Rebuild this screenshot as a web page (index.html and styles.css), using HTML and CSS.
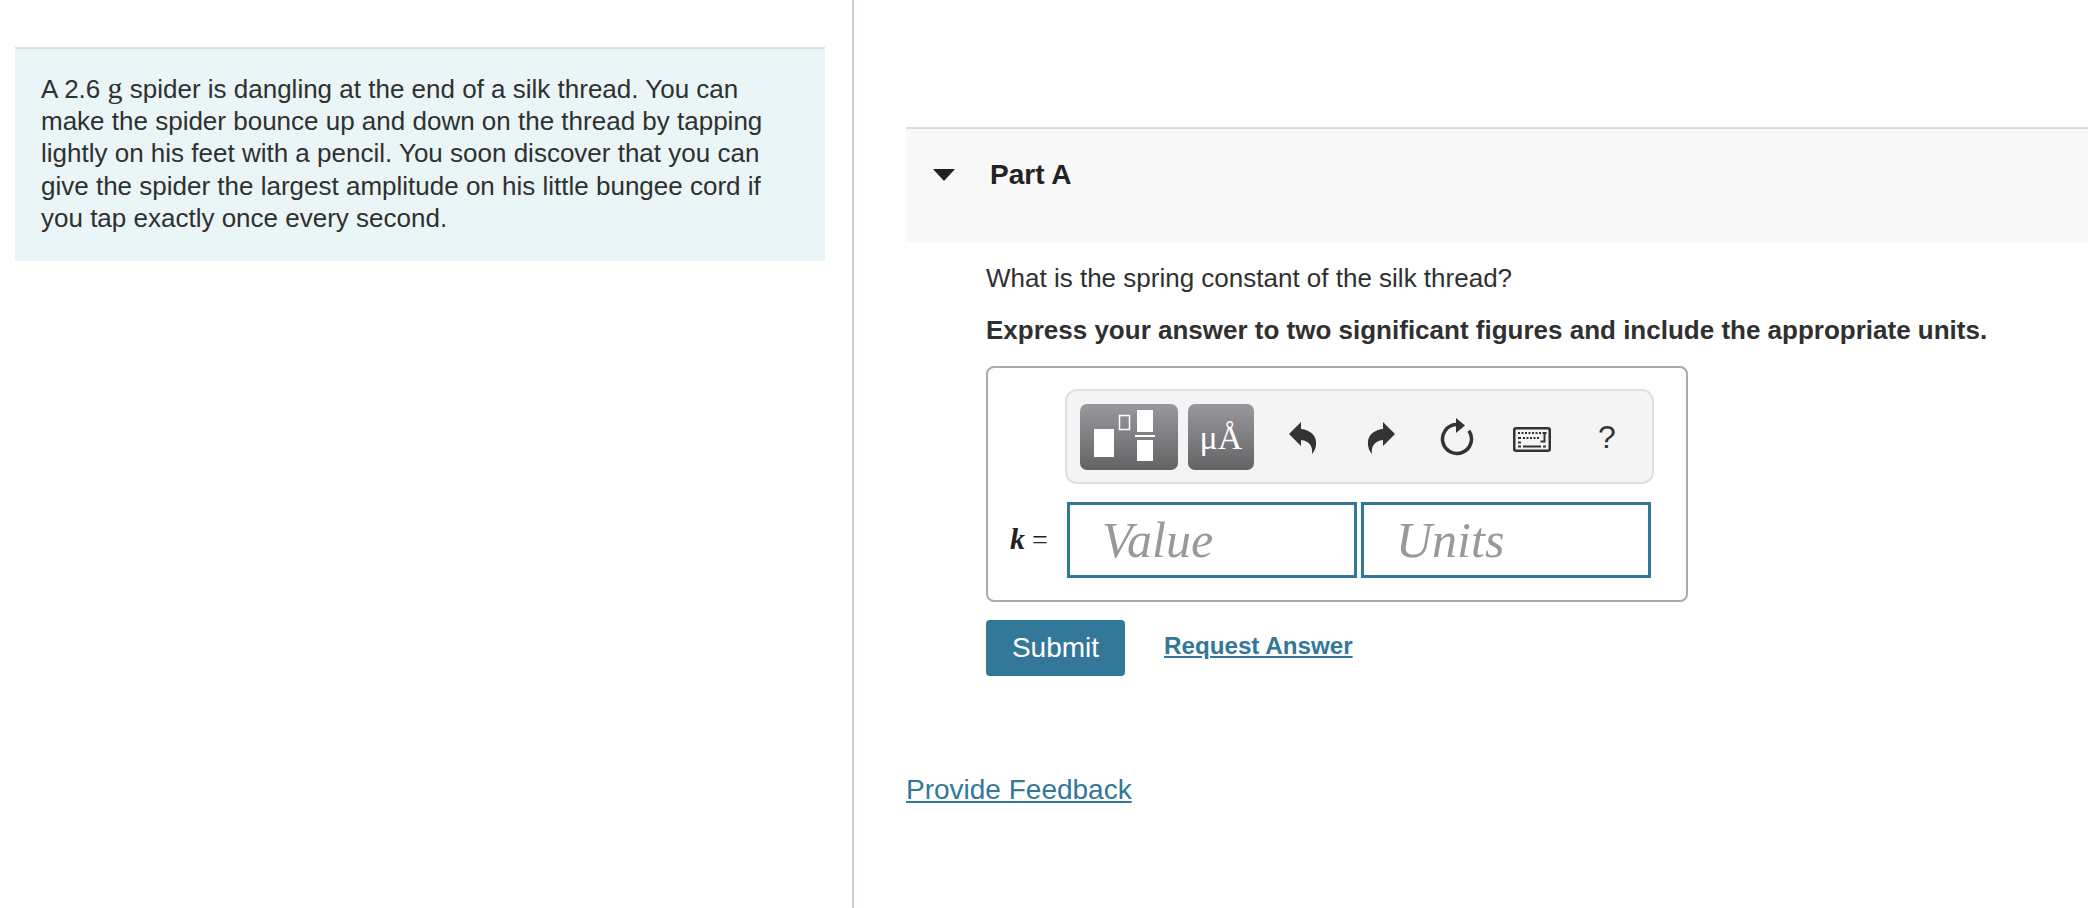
FILE: index.html
```html
<!DOCTYPE html>
<html lang="en">
<head>
<meta charset="utf-8">
<title>Spider problem</title>
<link rel="stylesheet" href="styles.css">
</head>
<body>
<div class="page">
  <aside class="left">
    <div class="intro">
      <p>A 2.6 <span class="unit">g</span> spider is dangling at the end of a silk thread. You can make the spider bounce up and down on the thread by tapping lightly on his feet with a pencil. You soon discover that you can give the spider the largest amplitude on his little bungee cord if you tap exactly once every second.</p>
    </div>
  </aside>
  <main class="right">
    <header class="part-head">
      <svg class="caret" width="24" height="14" viewBox="0 0 24 14"><path d="M1 1H23L12 13Z" fill="#222"/></svg>
      <h2>Part A</h2>
    </header>
    <section class="part-body">
      <p class="question">What is the spring constant of the silk thread?</p>
      <p class="instruct">Express your answer to two significant figures and include the appropriate units.</p>
      <div class="answer">
        <div class="toolbar">
          <div class="tool tool-wide">
            <svg width="98" height="66" viewBox="0 0 98 66">
              <rect x="14" y="25" width="20" height="28" fill="#fff"/>
              <rect x="39.500" y="11.500" width="10" height="14" fill="none" stroke="#fff" stroke-width="1.500"/>
              <rect x="57" y="6" width="16" height="22" fill="#fff"/>
              <rect x="55" y="31" width="20" height="2" fill="#fff"/>
              <rect x="57" y="36" width="16" height="21" fill="#fff"/>
            </svg>
          </div>
          <div class="tool tool-unit"><span>μÅ</span></div>
          <svg class="icon icon-undo" width="30" height="34" viewBox="0 0 30 34"><path d="M1 13 13 1V8C23 9 29 15 28 24 27.500 28 26 31 24 33 25 26 22 20 13 19V25Z" fill="#333"/></svg>
          <svg class="icon icon-redo" width="30" height="34" viewBox="0 0 30 34"><path d="M29 13 17 1V8C7 9 1 15 2 24 2.500 28 4 31 6 33 5 26 8 20 17 19V25Z" fill="#333"/></svg>
          <svg class="icon icon-reset" width="34" height="38" viewBox="0 0 34 38"><path d="M16 6.500A14.500 14.500 0 1 0 28.900 12.700" fill="none" stroke="#333" stroke-width="3.500"/><path d="M16 0 25 7.500 16 15Z" fill="#333"/></svg>
          <svg class="icon icon-keys" width="38" height="25" viewBox="0 0 38 25"><rect x="1.250" y="1.250" width="35.500" height="22.500" rx="2" fill="#f4f4f4" stroke="#333" stroke-width="2.500"/><path d="M5 6h2M8.500 6h2M12 6h2M15.500 6h2M19 6h2M22.500 6h2M26 6h2M29.500 6h4M5 11h3M10 11h2M13.500 11h2M17 11h2M20.500 11h2M24 11h2M31.500 6v8.500h-4M5 15.500h3M5 19.500h3M10 19.500h18M30 19.500h3" stroke="#333" stroke-width="2" fill="none"/></svg>
          <span class="help">?</span>
        </div>
        <div class="entry">
          <span class="label"><i>k</i> =</span>
          <div class="field">Value</div>
          <div class="field field-units">Units</div>
        </div>
      </div>
      <div class="actions">
        <button class="submit" type="button">Submit</button>
        <a class="request" href="#">Request Answer</a>
      </div>
    </section>
    <a class="feedback" href="#">Provide Feedback</a>
  </main>
</div>
</body>
</html>
```
FILE: styles.css
```css
* { box-sizing: border-box; }
html, body { margin: 0; padding: 0; background: #fff; }
body {
  font-family: "Liberation Sans", Arial, sans-serif;
  color: #2b2b2b;
  -webkit-font-smoothing: antialiased;
}
.page { display: flex; height: 908px; overflow: hidden; }
.left {
  flex: 0 0 853px;
  padding: 47px 27px 0 15px;
  border-right: 2px solid #c6d2e0;
}
.intro {
  background: #e9f5f7;
  border-top: 2px solid #dcdfdf;
  height: 214px;
  width: 810px;
  padding: 24px 41px 0 26px;
}
.intro p { margin: 0; font-size: 26px; line-height: 32.200px; color: #303030; }
.unit { font-family: "Liberation Serif", serif; font-size: 30px; line-height: 1; }
.right { flex: 1; padding: 127px 0 0 52px; }
.part-head {
  display: flex;
  align-items: flex-start;
  height: 115px;
  background: #f8f8f8;
  border-top: 2px solid #dcdcdc;
  padding: 30px 0 0 26px;
}
.caret { margin-top: 9px; }
.part-head h2 { margin: 0 0 0 34px; font-size: 28px; line-height: 32px; font-weight: 700; color: #222; }
.part-body { padding: 20px 0 0 80px; }
.question { margin: 0; font-size: 26px; line-height: 32px; color: #303030; }
.instruct { margin: 20px 0 0; font-size: 26px; line-height: 32px; font-weight: 700; color: #303030; }
.answer {
  width: 702px;
  height: 236px;
  margin-top: 20px;
  border: 2px solid #aaa;
  border-radius: 8px;
  padding: 21px 0 0 77px;
}
.toolbar {
  display: flex;
  align-items: center;
  width: 589px;
  height: 95px;
  background: #f4f4f4;
  border: 2px solid #dfdfdf;
  border-radius: 12px;
  padding: 0 0 0 13px;
}
.tool {
  height: 66px;
  border-radius: 7px;
  background: linear-gradient(#9a989e, #636365);
  flex: none;
}
.tool svg { display: block; }
.tool-wide { width: 98px; margin-right: 10px; }
.tool-unit {
  width: 66px;
  display: flex;
  align-items: flex-end;
  justify-content: center;
  padding-bottom: 10px;
  color: #fff;
  font-family: "Liberation Serif", serif;
  font-size: 34px;
  line-height: 44px;
}
.icon { flex: none; display: block; }
.icon-undo { margin-left: 34px; margin-top: 2px; }
.icon-redo { margin-left: 48px; margin-top: 2px; }
.icon-reset { margin-left: 44px; }
.icon-keys { margin-left: 39px; margin-top: 6px; }
.help { margin-left: 47px; font-size: 32px; line-height: 36px; color: #333; }
.entry { display: flex; align-items: center; margin: 18px 0 0 -77px; }
.label {
  width: 79px;
  padding: 0 0 3px 22px;
  flex: none;
  font-family: "Liberation Serif", serif;
  font-size: 28px;
  color: #222;
  white-space: nowrap;
}
.label i { font-weight: 700; font-size: 30px; }
.field {
  width: 290px;
  height: 76px;
  border: 3px solid #337899;
  padding-left: 32px;
  font-family: "Liberation Serif", serif;
  font-style: italic;
  font-size: 50px;
  line-height: 70px;
  color: #999;
}
.field-units { margin-left: 4px; padding-left: 32px; }
.actions { display: flex; align-items: flex-start; margin-top: 18px; }
.submit {
  width: 139px;
  height: 56px;
  border: 0;
  border-radius: 4px;
  background: #337899;
  color: #fff;
  font-family: inherit;
  font-size: 28px;
  padding: 0;
}
.request {
  margin: 10px 0 0 39px;
  font-size: 24.200px;
  line-height: 32px;
  font-weight: 700;
  color: #337899;
}
.feedback {
  display: inline-block;
  margin-top: 96px;
  font-size: 28px;
  line-height: 36px;
  color: #337899;
}
```
